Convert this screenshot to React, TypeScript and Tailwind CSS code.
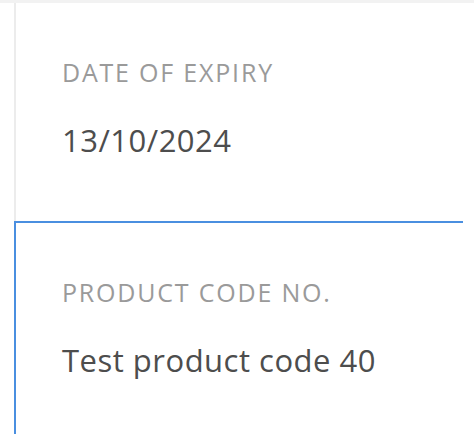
import React from 'react';

interface Field {
  label: string;
  value: string;
  active?: boolean;
}

const fields: Field[] = [
  { label: 'DATE OF EXPIRY', value: '13/10/2024' },
  { label: 'PRODUCT CODE NO.', value: 'Test product code 40', active: true },
];

const App: React.FC = () => {
  return (
    <div
      className="w-[474px] h-[434px] overflow-hidden bg-white"
      style={{ fontFamily: '"Open Sans", Lato, sans-serif' }}
    >
      {/* strip of the card above */}
      <div className="h-[3px] bg-[#f2f2f2]" />

      <div className="pl-[14px] pr-[11px]">
        {fields.map((f) => (
          <div
            key={f.label}
            className={
              f.active
                ? 'h-[240px] border-t-2 border-l-2 border-[#4a8fe0] pl-[46px] pt-[54px]'
                : 'h-[218px] border-l-2 border-[#ececec] pl-[46px] pt-[54px]'
            }
          >
            <div className="text-[25px] leading-[30px] tracking-[1.8px] text-[#9a9a9a]">{f.label}</div>
            <div className="mt-[35px] text-[31px] leading-[37px] tracking-[0.5px] text-[#4d4d4d]">
              {f.value}
            </div>
          </div>
        ))}
      </div>
    </div>
  );
};

export default App;
